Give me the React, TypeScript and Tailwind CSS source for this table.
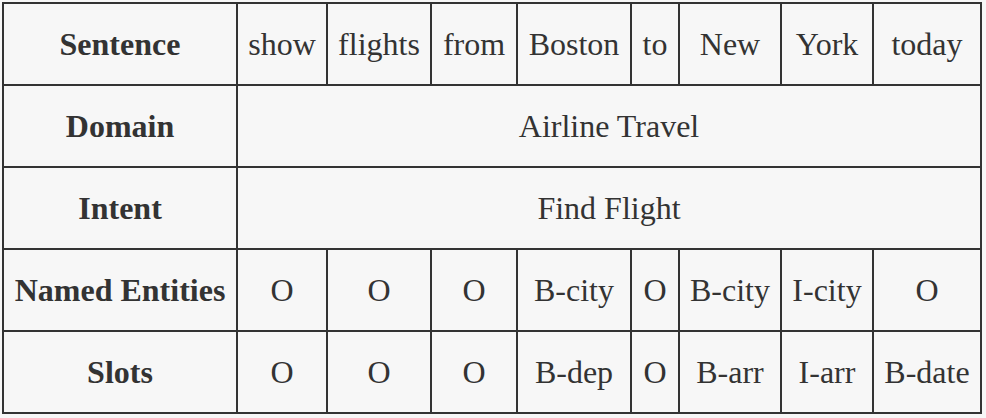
import React from 'react';

const words = ['show', 'flights', 'from', 'Boston', 'to', 'New', 'York', 'today'];
const entities = ['O', 'O', 'O', 'B-city', 'O', 'B-city', 'I-city', 'O'];
const slots = ['O', 'O', 'O', 'B-dep', 'O', 'B-arr', 'I-arr', 'B-date'];

const Cell: React.FC<{ children: React.ReactNode; head?: boolean; span?: boolean }> = ({
  children,
  head,
  span,
}) => (
  <div
    className={`flex items-center justify-center bg-[#f7f7f7] whitespace-nowrap ${
      head ? 'font-bold' : ''
    } ${span ? 'col-span-8' : ''}`}
  >
    {children}
  </div>
);

export default function App() {
  return (
    <div className="min-h-screen bg-[#f7f7f7] pt-[2px] pl-[2px]">
      <div className="grid w-[980px] grid-cols-[232px_88px_102px_84px_112px_46px_100px_90px_106px] auto-rows-[80px] gap-[2px] bg-[#333] p-[2px] font-['Liberation_Serif',serif] text-[32px] text-[#333]">
        <Cell head>Sentence</Cell>
        {words.map((w, i) => (
          <Cell key={i}>{w}</Cell>
        ))}

        <Cell head>Domain</Cell>
        <Cell span>Airline Travel</Cell>

        <Cell head>Intent</Cell>
        <Cell span>Find Flight</Cell>

        <Cell head>Named Entities</Cell>
        {entities.map((e, i) => (
          <Cell key={i}>{e}</Cell>
        ))}

        <Cell head>Slots</Cell>
        {slots.map((s, i) => (
          <Cell key={i}>{s}</Cell>
        ))}
      </div>
    </div>
  );
}
